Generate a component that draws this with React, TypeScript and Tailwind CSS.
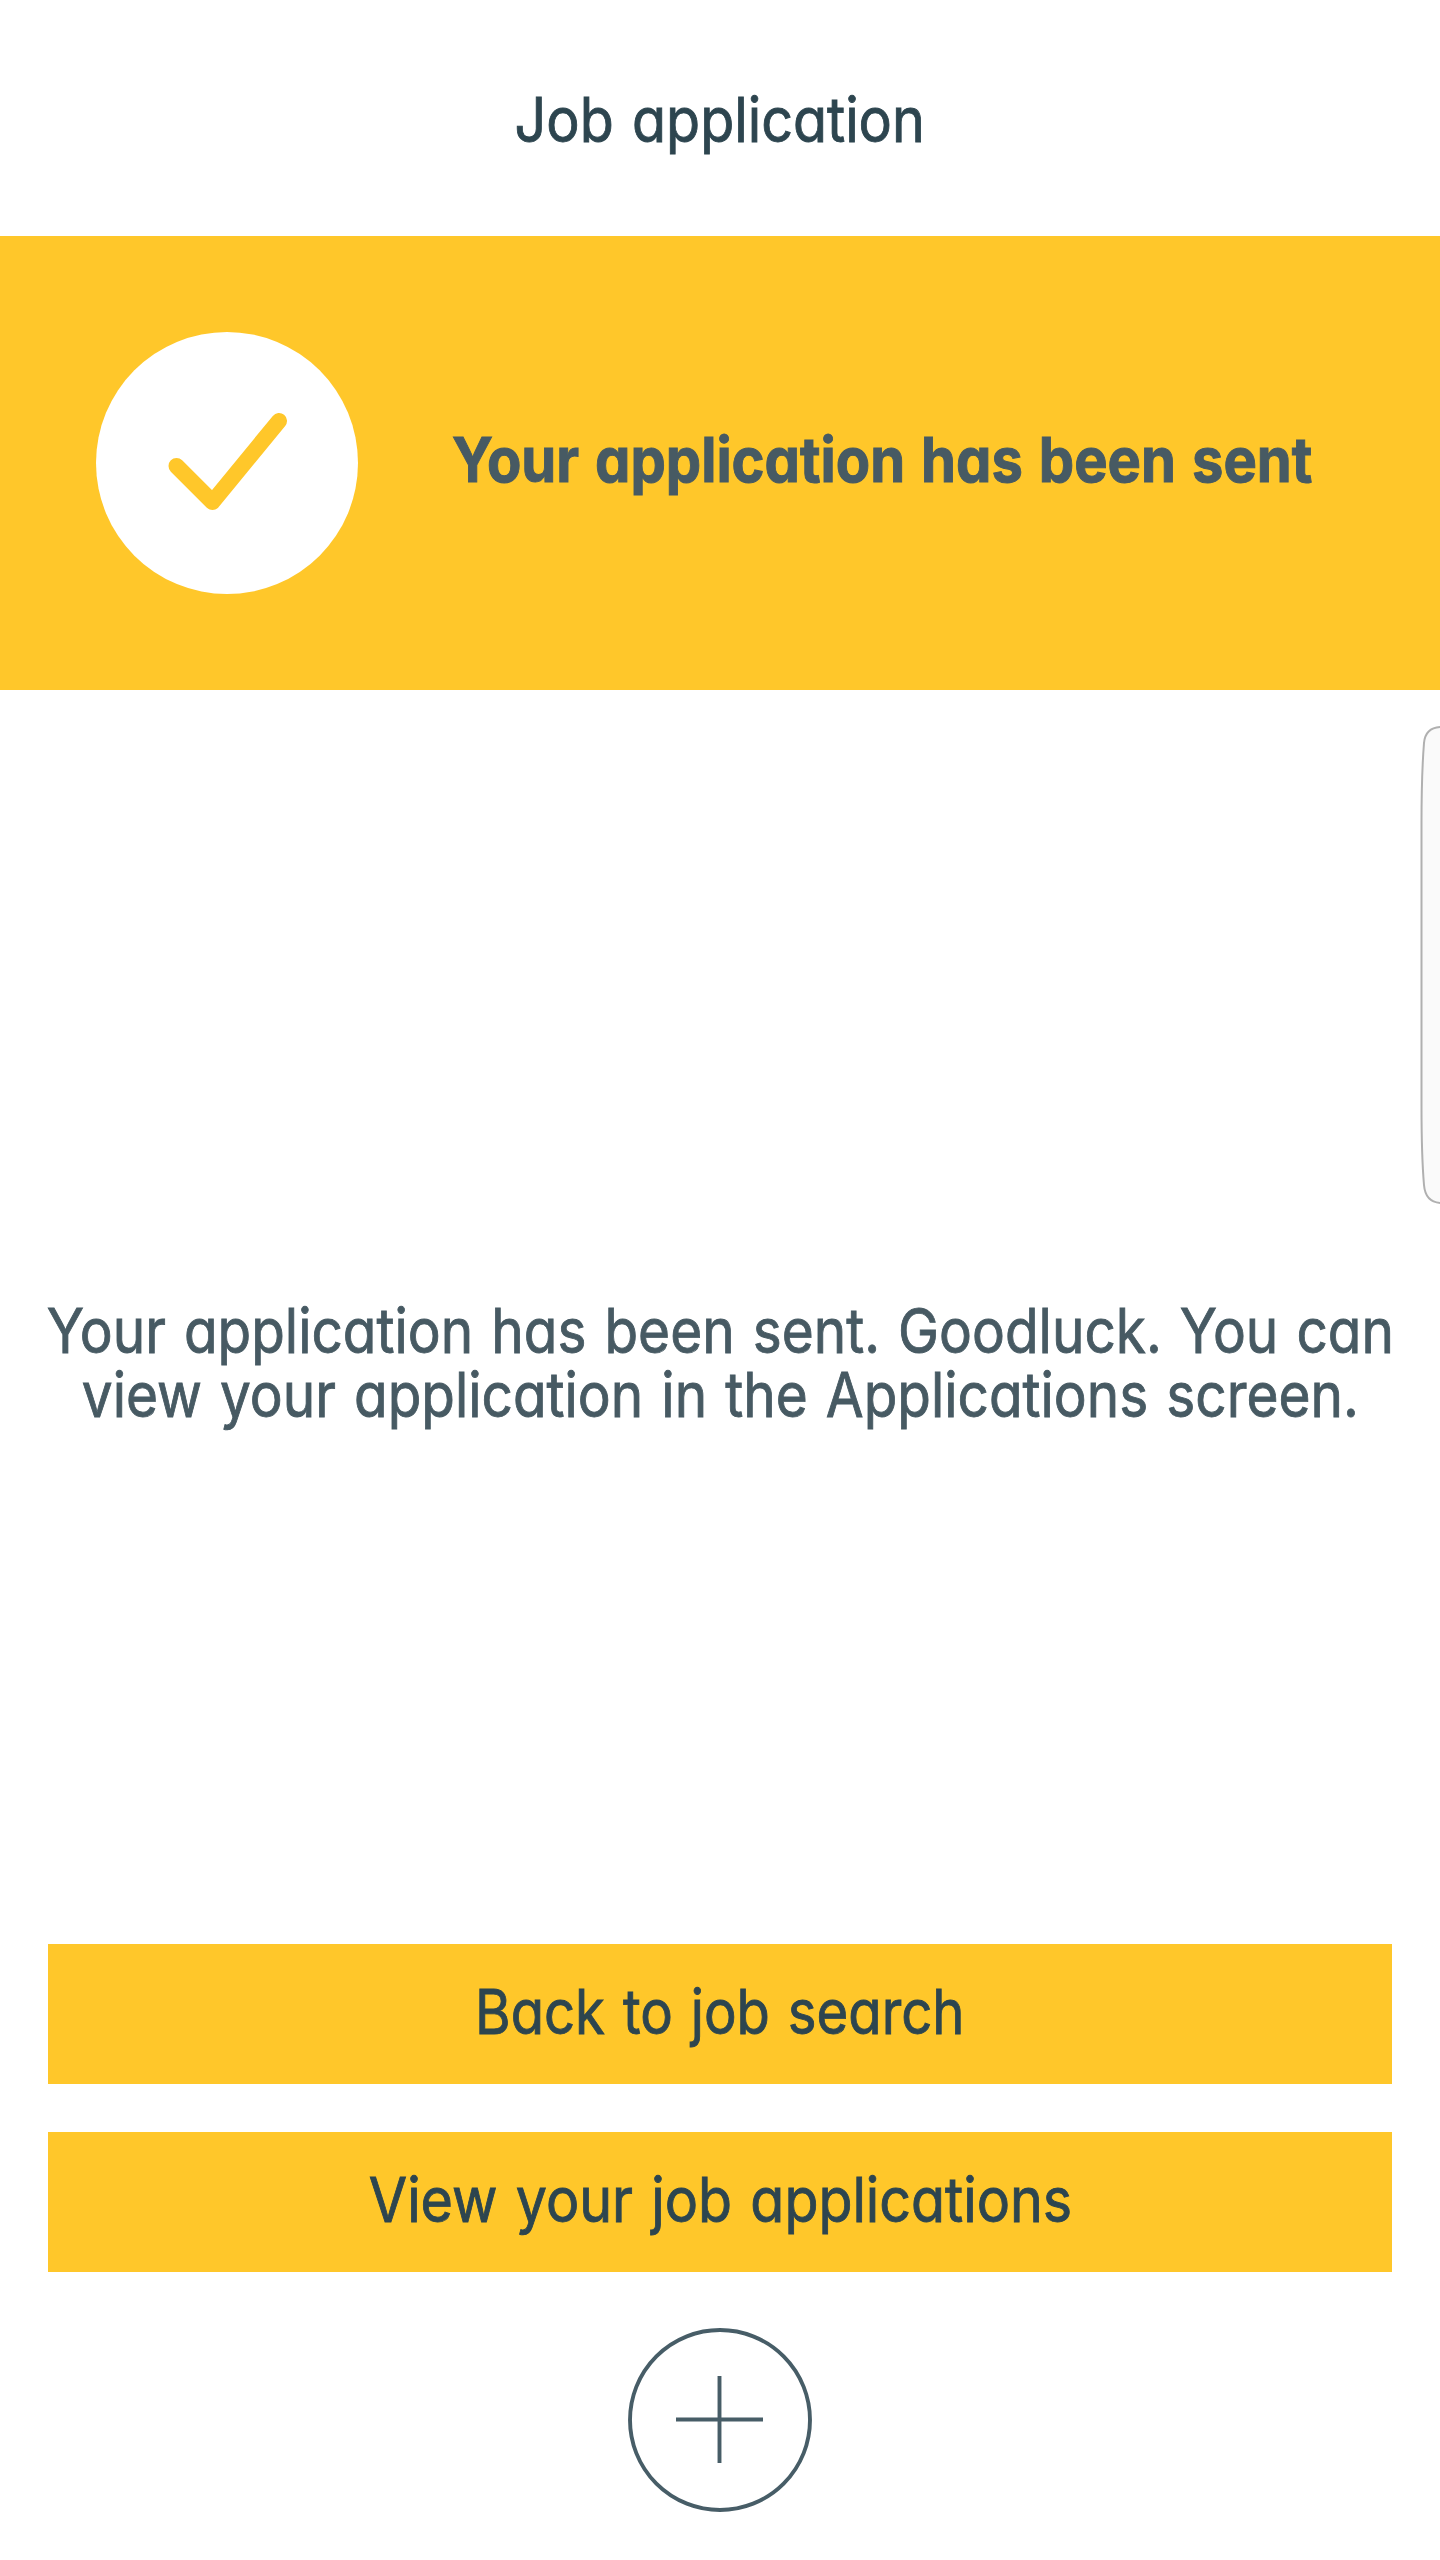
import type { ReactNode } from 'react';

function Label({ children, className = '' }: { children: ReactNode; className?: string }) {
  return (
    <span
      className={`block shrink-0 whitespace-nowrap text-[62px] leading-[64px] [word-spacing:3px] [font-feature-settings:'cv11'] ${className}`}
    >
      {children}
    </span>
  );
}

function ActionButton({ children, className }: { children: ReactNode; className: string }) {
  return (
    <button type="button" className="flex h-[140px] w-full items-center justify-center bg-[#ffc72a] pb-[5px] text-[#2d454f]">
      <Label className={className}>{children}</Label>
    </button>
  );
}

export default function App() {
  return (
    <div className="relative flex h-[2560px] w-[1440px] flex-col overflow-hidden bg-white font-['Inter',sans-serif] text-[#475a63]">
      <header className="flex h-[236px] shrink-0 justify-center pt-[88px] text-[#2d454f]">
        <h1>
          <Label className="scale-x-[.897] [-webkit-text-stroke:0.9px_#2d454f]">Job application</Label>
        </h1>
      </header>

      <section className="flex h-[454px] shrink-0 items-center bg-[#ffc72a] pl-24">
        <svg className="size-[262px] shrink-0" viewBox="0 0 262 262" fill="none">
          <circle cx="131" cy="131" r="131" fill="#fff" />
          <path d="M80.5 134 116.5 170 183 89" stroke="#ffc72a" strokeWidth="16" strokeLinecap="round" strokeLinejoin="round" />
        </svg>
        <Label className="ml-[94px] origin-left scale-x-[.905] pb-[6px] font-bold [-webkit-text-stroke:1px_#475a63]">
          Your application has been sent
        </Label>
      </section>

      <main className="flex flex-1 flex-col px-12">
        <p className="mt-[609px] flex justify-center text-center">
          <Label className="scale-x-[.886] [-webkit-text-stroke:0.9px_#475a63]">
            Your application has been sent. Goodluck. You can
            <br />
            view your application in the Applications screen.
          </Label>
        </p>
        <div className="mt-[517px] flex flex-col gap-12">
          <ActionButton className="scale-x-[.878] [-webkit-text-stroke:0.9px_#2d454f]">Back to job search</ActionButton>
          <ActionButton className="scale-x-[.896] [-webkit-text-stroke:0.9px_#2d454f]">View your job applications</ActionButton>
        </div>
        <button type="button" aria-label="Add" className="mt-[56px] self-center">
          <svg className="size-[184px]" viewBox="0 0 184 184" fill="none" stroke="#475d67">
            <circle cx="92" cy="92" r="90" strokeWidth="3.9" />
            <path d="M91.5 48v87M48 91.5h87" strokeWidth="3.9" />
          </svg>
        </button>
      </main>

      <svg className="absolute right-0 top-[724px] h-[482px] w-5" viewBox="0 0 20 482">
        <path d="M22 3C11 3 5 8 4 19Q1.5 50 1.5 100V382Q1.5 432 4 461C5 473 11 479 22 479Z" fill="#fafafa" stroke="#b0b0b0" strokeWidth="2" />
      </svg>
    </div>
  );
}
